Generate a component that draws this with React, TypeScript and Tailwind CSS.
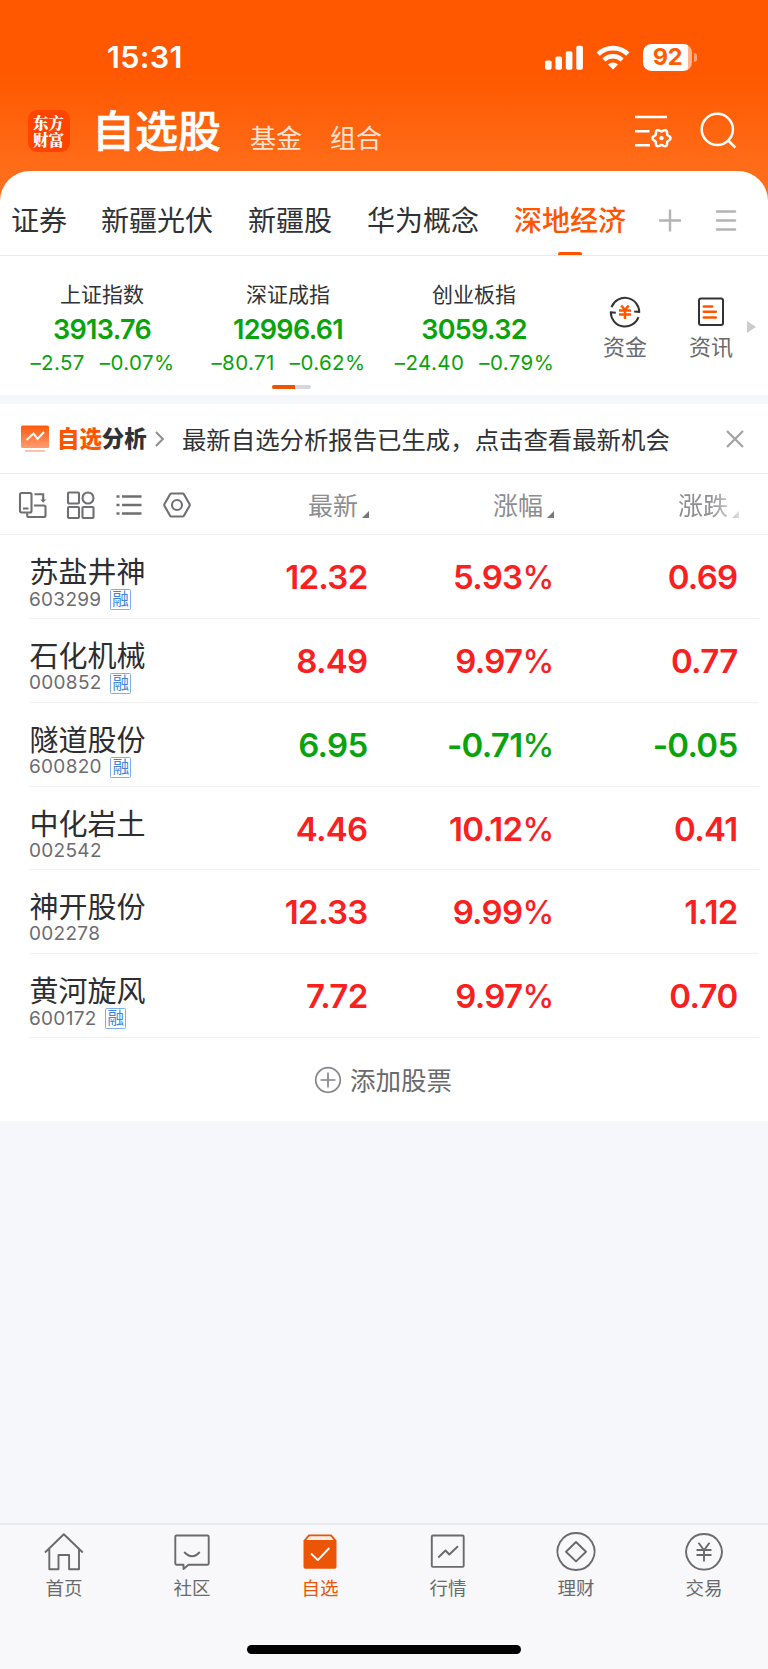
import React from "react";

type Stock = { name: string; code: string; margin: boolean; price: string; pct: string; diff: string; up: boolean };

const stocks: Stock[] = [
  { name: "苏盐井神", code: "603299", margin: true, price: "12.32", pct: "5.93", diff: "0.69", up: true },
  { name: "石化机械", code: "000852", margin: true, price: "8.49", pct: "9.97", diff: "0.77", up: true },
  { name: "隧道股份", code: "600820", margin: true, price: "6.95", pct: "-0.71", diff: "-0.05", up: false },
  { name: "中化岩土", code: "002542", margin: false, price: "4.46", pct: "10.12", diff: "0.41", up: true },
  { name: "神开股份", code: "002278", margin: false, price: "12.33", pct: "9.99", diff: "1.12", up: true },
  { name: "黄河旋风", code: "600172", margin: true, price: "7.72", pct: "9.97", diff: "0.70", up: true },
];

const indices = [
  { name: "上证指数", value: "3913.76", change: "–2.57", pct: "–0.07%" },
  { name: "深证成指", value: "12996.61", change: "–80.71", pct: "–0.62%" },
  { name: "创业板指", value: "3059.32", change: "–24.40", pct: "–0.79%" },
];

// Six-lobed gear outline centred on (cx, cy).
function gearPath(cx: number, cy: number) {
  const points: string[] = [];
  for (let deg = 0; deg < 360; deg += 5) {
    const a = (deg * Math.PI) / 180;
    const r = 7.9 + 1.1 * Math.cos(6 * a);
    points.push(`${(cx + r * Math.cos(a)).toFixed(2)} ${(cy + r * Math.sin(a)).toFixed(2)}`);
  }
  return `M${points.join("L")}Z`;
}

function StatusBar() {
  return (
    <div className="flex h-[114px] items-center justify-between pl-[107px] pr-[71px]">
      <span className="text-[30.5px] font-semibold leading-none tracking-[0.3px]">15:31</span>
      <div className="flex items-center">
        <svg width="39" height="25" viewBox="0 0 39 25" fill="currentColor">
          <rect x="0" y="15.5" width="6.6" height="9.3" rx="1.8" />
          <rect x="10.4" y="11.4" width="6.6" height="13.4" rx="1.8" />
          <rect x="20.8" y="6.2" width="6.6" height="18.6" rx="1.8" />
          <rect x="31.3" y="0.8" width="6.6" height="24" rx="1.8" />
        </svg>
        <svg className="ml-3" width="34" height="25" viewBox="0 0 34 25" fill="none" stroke="currentColor">
          <path d="M2.2 9.2a21 21 0 0 1 29.6 0" strokeWidth="4.6" />
          <path d="M7.9 15a13 13 0 0 1 18.2 0" strokeWidth="4.4" />
          <path d="M17 24.6l-5-5a7.2 7.2 0 0 1 10 0z" fill="currentColor" stroke="none" />
        </svg>
        <div className="ml-[13px] flex h-[27px] w-[49px] items-center justify-center rounded-[8.5px] bg-[linear-gradient(90deg,#fff_45px,#ffb38c_45px)]">
          <span className="text-[23.5px] font-bold leading-none tracking-[-0.3px] text-[#ff5a04]">92</span>
        </div>
        <span className="ml-[2px] h-[9px] w-[3px] rounded-r-[3px] bg-[#ffa274]" />
      </div>
    </div>
  );
}

function TitleBar() {
  return (
    <div className="flex h-[57px] items-start pl-7">
      <div className="mt-[-4px] flex size-[42px] shrink-0 items-center justify-center rounded-[9px] bg-[#ff4400]">
        <span className="w-[32px] whitespace-normal break-all font-['Noto_Serif_CJK_SC','Noto_Sans_CJK_SC',serif] text-[15.5px] font-black leading-[17px]">东方财富</span>
      </div>
      <h1 className="ml-[22px] mt-[-5px] text-[43px] font-medium leading-[44px] [-webkit-text-stroke:0.6px_white]">自选股</h1>
      <span className="ml-[29px] mt-[12px] text-[26px] leading-[26px] text-[#ffe3d3]">基金</span>
      <span className="ml-[28px] mt-[12px] text-[26px] leading-[26px] text-[#ffe3d3]">组合</span>
      <svg className="ml-[253px]" width="38" height="36" viewBox="0 0 38 36" fill="none" stroke="currentColor" strokeWidth="2.5">
        <path d="M0 3h32M0 17.2h14.5M0 31.2h15" />
        <path d={gearPath(26.5, 24.2)} />
        <circle cx="26.5" cy="24.2" r="2.1" fill="currentColor" stroke="none" />
      </svg>
      <svg className="ml-[27px] mt-[-3px]" width="38" height="40" viewBox="0 0 38 40" fill="none" stroke="currentColor" strokeWidth="2.5">
        <circle cx="17.3" cy="18.3" r="15.6" />
        <path d="M28.2 29.5l7.2 7.2" />
      </svg>
    </div>
  );
}

function Tabs() {
  return (
    <div className="flex h-[85px] items-start rounded-t-[30px] border-b border-[#e9e9eb] bg-white pl-[11px] pt-[36px] text-[28px] leading-[28px] text-[#303236]">
      <span>证券</span>
      <span className="ml-[34px]">新疆光伏</span>
      <span className="ml-[35px]">新疆股</span>
      <span className="ml-[35px]">华为概念</span>
      <div className="ml-[35px] flex flex-col items-center">
        <span className="font-medium text-[#ff5500]">深地经济</span>
        <span className="mt-[17px] h-[3px] w-6 rounded-t-[2px] bg-[#ff5500]" />
      </div>
      <svg className="ml-[32px] mt-[2px]" width="24" height="24" viewBox="0 0 24 24" stroke="#b4b4b6" strokeWidth="2.4">
        <path d="M1 11.5h22M12 .5v22" />
      </svg>
      <svg className="ml-[33px] mt-[2px]" width="22" height="24" viewBox="0 0 22 24" stroke="#b4b4b6" strokeWidth="2.6" strokeLinecap="round">
        <path d="M2 2.5h18M2 11.5h18M2 20.5h18" />
      </svg>
    </div>
  );
}

function Indices() {
  return (
    <div className="flex h-[139px] bg-white pl-[9px]">
      <div className="flex w-[558px] flex-col">
        <div className="flex">
          {indices.map((it) => (
            <div key={it.name} className="flex w-[186px] flex-col items-center">
              <span className="mt-[28px] text-[21px] leading-[22px] text-[#303236]">{it.name}</span>
              <span className="mt-[9px] text-[27px] font-semibold leading-[30px] tracking-[-0.7px] text-[#09a30b]">{it.value}</span>
              <div className="mt-[6px] flex gap-[15px] whitespace-nowrap pl-[1px] text-[20.5px] leading-[24px] tracking-[0.4px] text-[#09a30b]">
                <span>{it.change}</span>
                <span>{it.pct}</span>
              </div>
            </div>
          ))}
        </div>
        <div className="ml-[263px] mt-[10px] flex h-[4px] w-[39px] overflow-hidden rounded-full bg-[#d5d8df]">
          <span className="w-[23px] bg-[#f05300]" />
        </div>
      </div>
      <div className="ml-[14px] flex w-[88px] flex-col items-center pt-[40px]">
        <svg width="32" height="32" viewBox="0 0 32 32" fill="none" stroke="#333" strokeWidth="2">
          <path d="M2.5 11.2A14.3 14.3 0 0 1 30.2 16.8M30.8 16l-5.6-.5M29.5 21.2A14.3 14.3 0 0 1 1.8 15.6M1.2 16.2l5.6.5" />
          <path d="M12.3 9.5l3.7 4.5 3.7-4.5M10 14.5h12M10 18.5h12M16 14v9" stroke="#ff5500" strokeWidth="2.5" />
        </svg>
        <span className="mt-[7px] text-[22px] leading-[24px] text-[#6a6a6c]">资金</span>
      </div>
      <div className="flex w-[84px] flex-col items-center pt-[41px]">
        <svg width="26" height="30" viewBox="0 0 26 30" fill="none" stroke="#333" strokeWidth="2">
          <rect x="1" y="1.5" width="24" height="26.5" rx="2" />
          <path d="M5.8 9.5h8.4M5.8 14.8h12M5.8 20.5h12" stroke="#ff5500" strokeWidth="2.6" strokeLinecap="round" />
        </svg>
        <span className="mt-[8px] text-[22px] leading-[24px] text-[#6a6a6c]">资讯</span>
      </div>
      <svg className="ml-[-6px] mt-[65px]" width="9" height="12" viewBox="0 0 9 12">
        <path d="M0 0l9 6-9 6z" fill="#ccc" />
      </svg>
    </div>
  );
}

function Analysis() {
  return (
    <div className="flex h-[70px] items-center border-b border-[#ececee] bg-white pl-[21px]">
      <svg className="mt-[1px]" width="28" height="28" viewBox="0 0 28 28" fill="none">
        <defs>
          <linearGradient id="board" x1="0" y1="0" x2="0" y2="1">
            <stop offset="0" stopColor="#ff5a0a" />
            <stop offset="1" stopColor="#ff9c70" />
          </linearGradient>
        </defs>
        <rect y="0.5" width="28" height="22.5" rx="1.5" fill="url(#board)" />
        <path d="M5.5 15l7-6.5 4 5.5 6.5-7" stroke="#fff" strokeWidth="2" />
        <path d="M4 26h20" stroke="#ffc2a5" strokeWidth="2" />
      </svg>
      <span className="ml-[8px] mt-[2px] text-[22.4px] font-black leading-none text-[#ff5500]">
        自选<span className="text-[#303236]">分析</span>
      </span>
      <svg className="ml-[8.4px] mt-[1px]" width="9" height="16" viewBox="0 0 9 16" fill="none" stroke="#8e8e90" strokeWidth="2">
        <path d="M1 1l6.8 7L1 15" />
      </svg>
      <span className="ml-[18px] mt-[3px] text-[24.4px] leading-none text-[#303236]">最新自选分析报告已生成，点击查看最新机会</span>
      <svg className="ml-[56px] mt-[1px]" width="18" height="18" viewBox="0 0 18 18" stroke="#a4a4a6" strokeWidth="2.3">
        <path d="M1 1l16 16M17 1L1 17" />
      </svg>
    </div>
  );
}

function SortLabel({ children }: { children: React.ReactNode }) {
  return (
    <span className="flex items-end text-[25px] leading-[26px]">
      {children}
      <svg className="mb-[1px] ml-[4px]" width="7" height="7" viewBox="0 0 7 7">
        <path d="M7 0v7H0z" fill="#77777b" />
      </svg>
    </span>
  );
}

function TableHead() {
  return (
    <div className="flex h-[61px] items-center border-b border-[#f0f0f2] bg-white pl-[18px] text-[#8d8d90]">
      <div className="flex w-[290px] items-center pt-[1px] text-[#6f6f72]">
        <svg width="30" height="28" viewBox="0 0 30 28" fill="none" stroke="currentColor" strokeWidth="2.1">
          <rect x="2" y="2" width="11.5" height="19.5" rx="1.5" />
          <path d="M5 17.5h5.5M16.5 3.2h8.7v6M16 14.5h9.7q1.8 0 1.8 1.8v7.9q0 1.8-1.8 1.8H11q-1.8 0-1.8-1.8v-2" />
          <path d="M22.3 8.5h5.8l-2.9 3.3z" fill="currentColor" stroke="none" />
        </svg>
        <svg className="ml-[18px]" width="30" height="28" viewBox="0 0 30 28" fill="none" stroke="currentColor" strokeWidth="2.1">
          <rect x="2" y="1.5" width="11" height="11" rx="1" />
          <circle cx="22" cy="7" r="5.5" />
          <rect x="2" y="16" width="11" height="11" rx="1" />
          <rect x="16.5" y="16" width="11" height="11" rx="1" />
        </svg>
        <svg className="ml-[20px]" width="26" height="24" viewBox="0 0 26 24" fill="none" stroke="currentColor" strokeWidth="2.5">
          <path d="M6 3.5h19.5M6 12h19.5M6 20.5h19.5M.5 3.5h3M.5 12h3M.5 20.5h3" />
        </svg>
        <svg className="ml-[21px]" width="28" height="26" viewBox="0 0 28 26" fill="none" stroke="currentColor" strokeWidth="2.1">
          <path d="M8.3 1.5h11.4q.8 0 1.2.7l5.6 9.9q.5.9 0 1.8l-5.6 9.9q-.4.7-1.2.7H8.3q-.8 0-1.2-.7L1.5 13.9q-.5-.9 0-1.8l5.6-9.9q.4-.7 1.2-.7z" />
          <circle cx="14" cy="13" r="5" />
        </svg>
      </div>
      <div className="flex pt-[3px]">
        <SortLabel>最新</SortLabel>
        <div className="ml-[124px]"><SortLabel>涨幅</SortLabel></div>
        <div className="ml-[124px] [mask-image:linear-gradient(90deg,#000_50%,rgba(0,0,0,0.25)_100%)]"><SortLabel>涨跌</SortLabel></div>
      </div>
    </div>
  );
}

function Row({ s }: { s: Stock }) {
  return (
    <div className="ml-[29px] mr-[9px] flex h-[83.85px] border-b border-[#f1f1f3]">
      <div className="flex w-[160px] flex-col">
        <span className="ml-[0.5px] mt-[22px] text-[29px] leading-[32px] text-[#2c2e32]">{s.name}</span>
        <div className="flex items-center">
          <span className="text-[19px] leading-[20px] tracking-[0.3px] text-[#6c6c70]">{s.code}</span>
          {s.margin && (
            <span className="ml-[8.5px] flex size-[21px] items-center justify-center rounded-[1.5px] border border-[#7fb0ea] text-[16.5px] leading-none text-[#3c86dc]">融</span>
          )}
        </div>
      </div>
      <div className={s.up ? "flex pt-[22px] text-right text-[33px] font-semibold leading-[40px] tracking-[-0.7px] text-[#f9201f]" : "flex pt-[22px] text-right text-[33px] font-semibold leading-[40px] tracking-[-0.7px] text-[#09a30b]"}>
        <span className="w-[178.5px]">{s.price}</span>
        <span className="w-[186px]">
          {s.pct}
          <span className="text-[32px] font-medium">%</span>
        </span>
        <span className="w-[184px]">{s.diff}</span>
      </div>
    </div>
  );
}

const navs = [
  { label: "首页", icon: <path d="M1 19.5L19.8 1.2l19 18.3M5.3 16v20.2h9.2V22h10.6v14.2h9.9V16" /> },
  { label: "社区", icon: <path d="M4.5 2.5h31q1.2 0 1.2 1.2v26.8q0 1.2-1.2 1.2H16.5l-5 4.3v-4.3h-7q-1.2 0-1.2-1.2V3.7q0-1.2 1.2-1.2zM12.2 19q8 8.5 15.5 0" /> },
  {
    label: "自选",
    icon: (
      <>
        <path d="M8.5 1.5h23l5 6v26.5q0 1.7-1.7 1.7H5.2q-1.7 0-1.7-1.7V7.5z" fill="#ec5506" stroke="none" />
        <path d="M9.5 3.3h21l3.2 3.6H6.3z" fill="#fdeee6" stroke="none" />
        <path d="M11 20.5l6.8 6.6L29.3 15" stroke="#fff" />
      </>
    ),
  },
  { label: "行情", icon: <path d="M5 2.5h29.5q1.2 0 1.2 1.2v29q0 1.2-1.2 1.2H5q-1.2 0-1.2-1.2v-29q0-1.2 1.2-1.2zM10.3 24.5l7.2-7 3.8 4 8.7-8.3" /> },
  { label: "理财", icon: <path d="M20 0a18.5 18.5 0 1 0 .01 0zM20 9l10 9.7-10 9.7-10-9.7z" /> },
  { label: "交易", icon: <path d="M20 1a17.8 17.8 0 1 0 .01 0zM14.5 9.8l5.5 7.5 5.5-7.5M12.5 17h15M12.5 22h15M20 17.5v11" /> },
];

function BottomNav() {
  return (
    <div className="flex h-[146px] flex-col items-center border-t-2 border-[#e8eaef] bg-[#f8f8fb]">
      <div className="flex w-full">
        {navs.map((n, i) => (
          <div key={n.label} className={i === 2 ? "flex w-32 flex-col items-center text-[#ec5506]" : "flex w-32 flex-col items-center text-[#6a6a6c]"}>
            <svg className="mt-[8px] overflow-visible" width="40" height="38" viewBox="0 0 40 38" fill="none" stroke="currentColor" strokeWidth="1.9" strokeLinejoin="round">
              {n.icon}
            </svg>
            <span className="mt-[6px] text-[18.5px] leading-[22px]">{n.label}</span>
          </div>
        ))}
      </div>
      <span className="mt-[46px] h-[9px] w-[274px] rounded-full bg-black" />
    </div>
  );
}

export default function App() {
  return (
    <div className="flex h-[1669px] w-[768px] flex-col overflow-hidden whitespace-nowrap bg-[#f6f7fa] font-['Inter','Noto_Sans_CJK_SC',sans-serif]">
      <div className="bg-[linear-gradient(180deg,#ff5800_0px,#ff5800_75px,#ff6c18_165px,#ff7020_200px)] text-white">
        <StatusBar />
        <TitleBar />
        <Tabs />
      </div>
      <Indices />
      <div className="h-[9px]" />
      <Analysis />
      <TableHead />
      <div className="h-[586px] bg-white">
        {stocks.map((s) => (
          <Row key={s.code} s={s} />
        ))}
        <div className="flex h-[83px] items-center justify-center gap-[8px] pr-[2px] text-[#6a6a6c]">
          <svg width="28" height="28" viewBox="0 0 28 28" fill="none" stroke="#85858a" strokeWidth="1.7">
            <circle cx="14" cy="14" r="12.3" />
            <path d="M6.5 14h15M14 6.5v15" />
          </svg>
          <span className="mt-[2px] text-[25.5px] leading-none">添加股票</span>
        </div>
      </div>
      <div className="flex-1" />
      <BottomNav />
    </div>
  );
}
